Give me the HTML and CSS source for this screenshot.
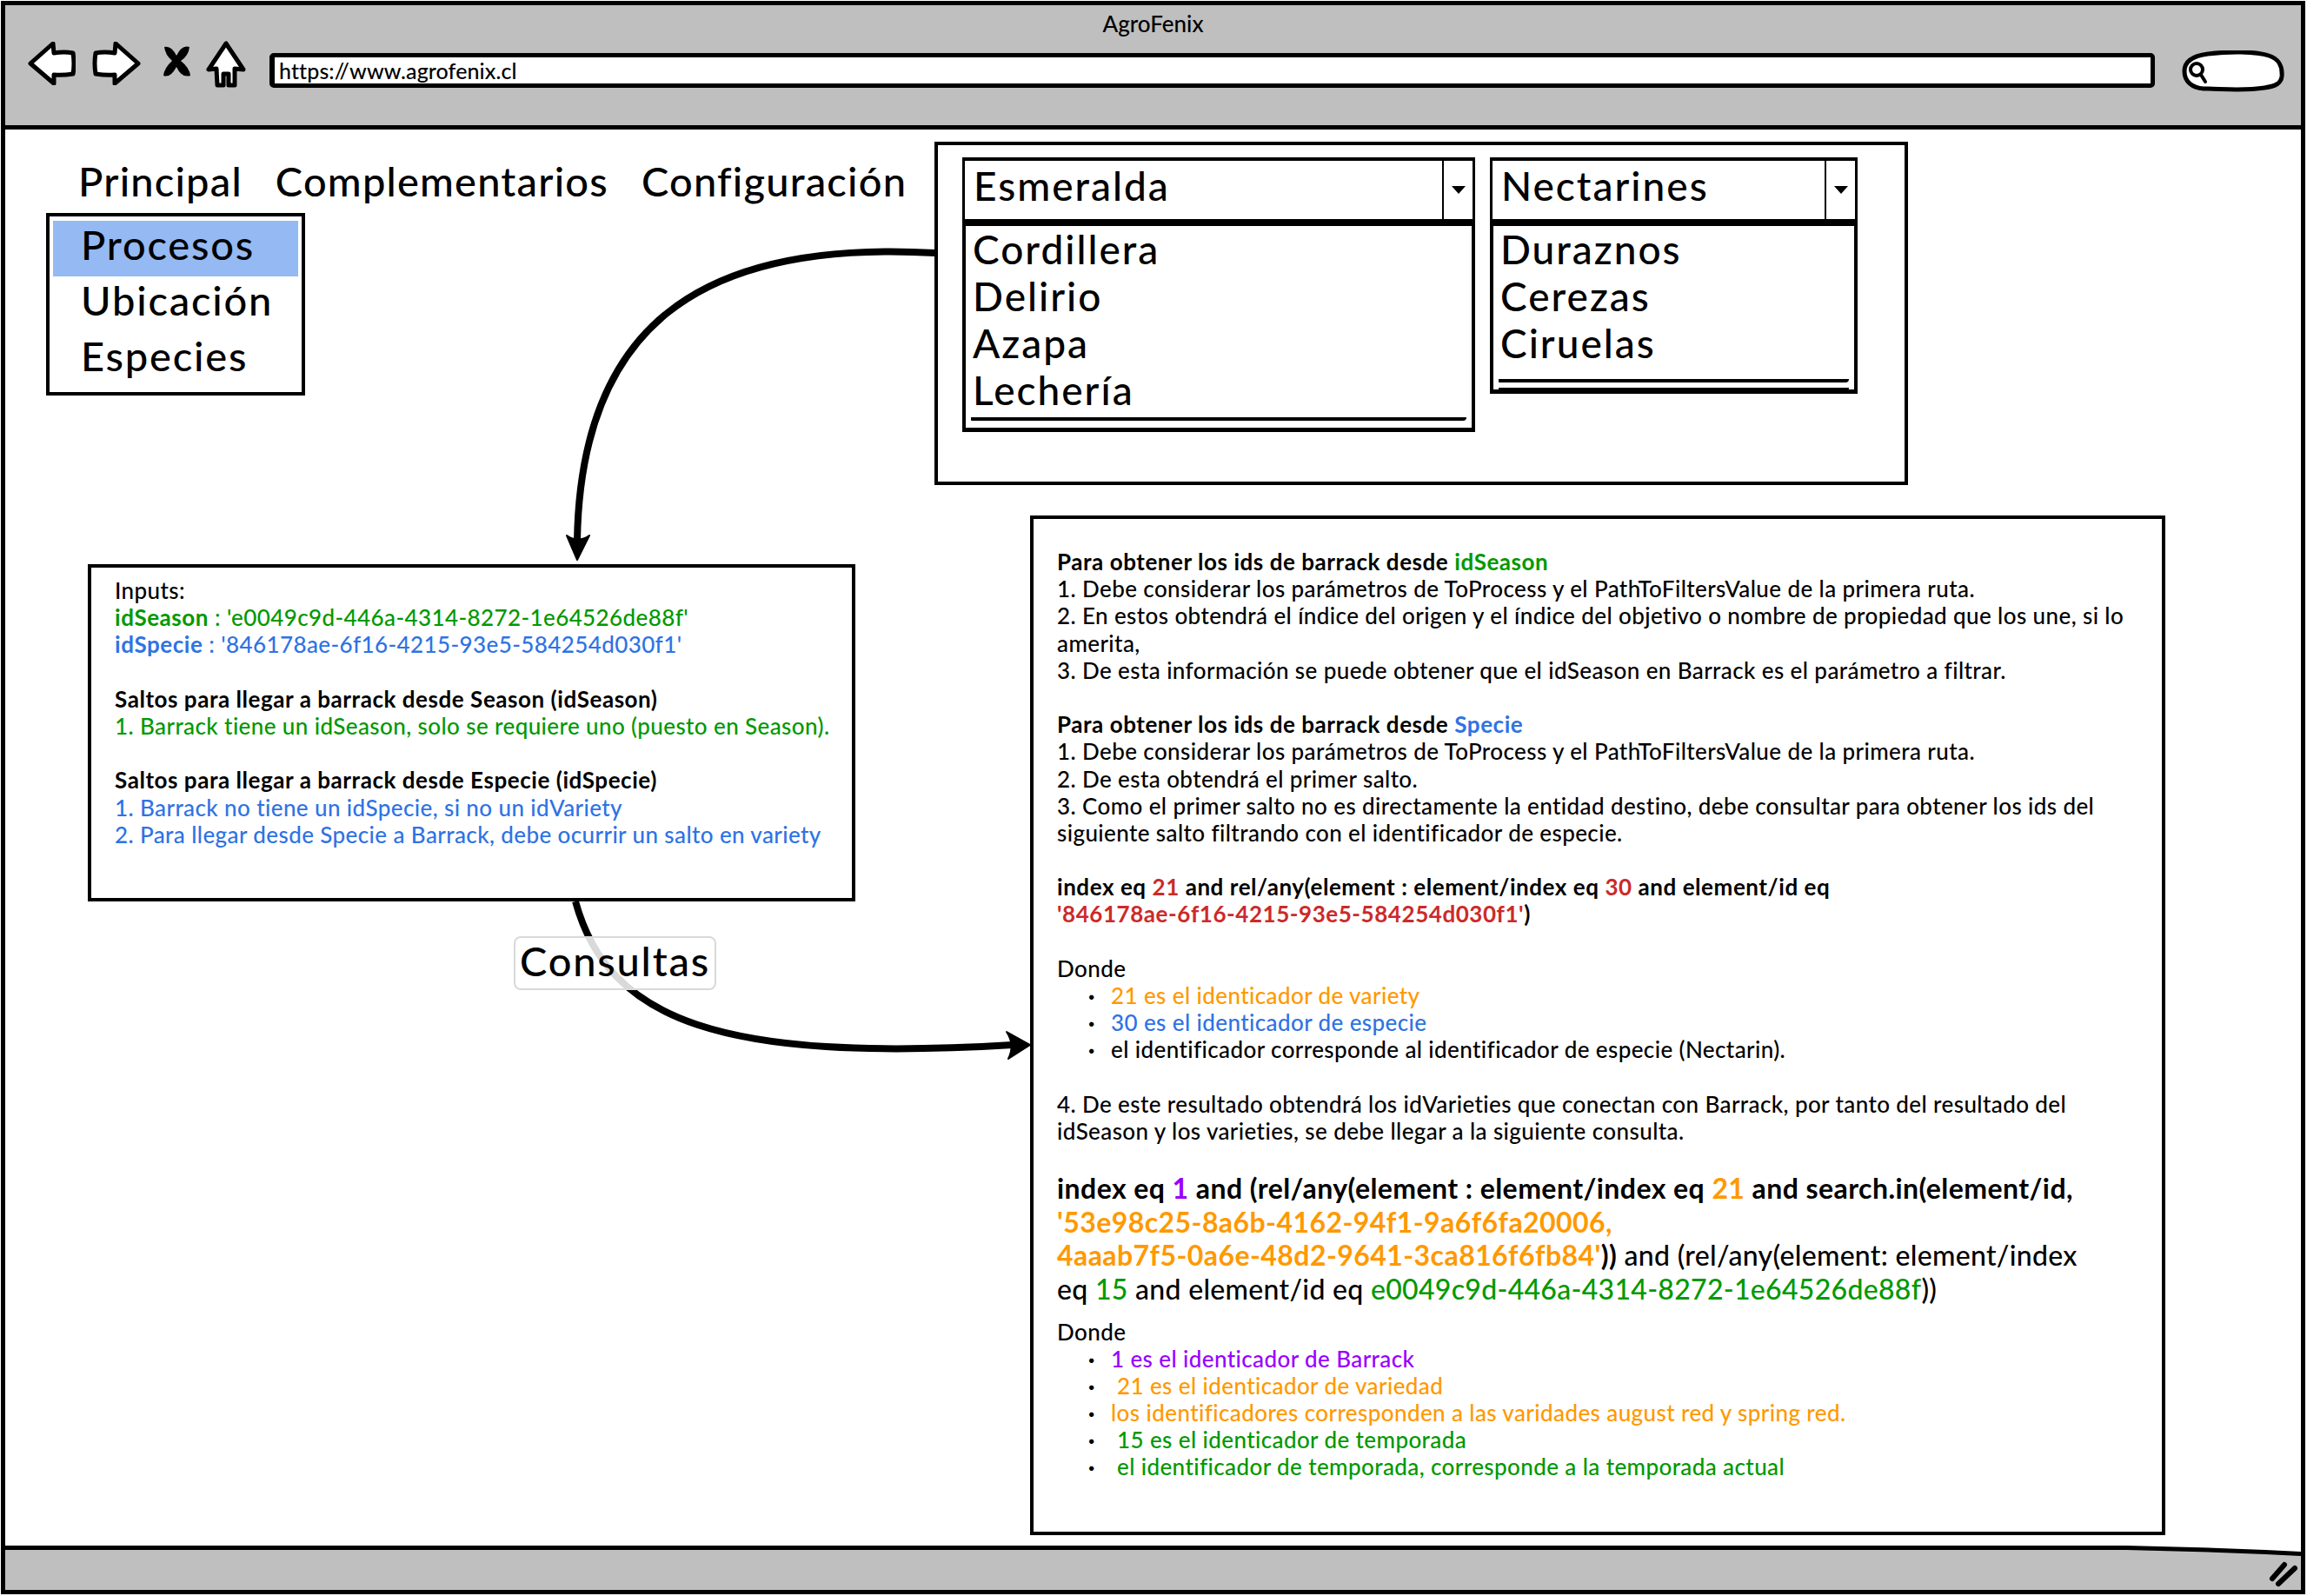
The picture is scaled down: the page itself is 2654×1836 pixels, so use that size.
FILE: index.html
```html
<!DOCTYPE html>
<html lang="es">
<head>
<meta charset="utf-8">
<title>AgroFenix</title>
<link rel="stylesheet" href="styles.css">
</head>
<body>
<div class="window">
  <div class="frame">
    <header class="browser-bar">
      <div class="browser-title">AgroFenix</div>
      <div class="toolbar">
        <svg class="icon icon-back" viewBox="0 0 55 50"><path d="M3 25 L29 2 L30 13 Q42 11 52 13 Q54 25 52 37 Q40 39 30 38 L30 48 Z"/></svg>
        <svg class="icon icon-forward" viewBox="0 0 56 50"><path d="M53 25 L27 2 L26 13 Q14 11 4 13 Q2 25 4 37 Q16 39 26 38 L26 48 Z"/></svg>
        <svg class="icon icon-stop" viewBox="0 0 33 37"><path class="solid" d="M2 2 Q10 0 16 12 Q22 -1 31 2 Q30 12 21 18 Q31 26 32 35 Q22 38 16 25 Q9 38 1 35 Q2 26 11 18 Q3 11 2 2 Z"/></svg>
        <svg class="icon icon-home" viewBox="0 0 46 54"><path d="M23 3 L3 33 L12 32 L13 51 L20 51 L20 38 L26 38 L26 51 L33 51 L33 32 L43 33 Z"/></svg>
        <div class="url-bar">https://www.agrofenix.cl</div>
        <svg class="search-pill" viewBox="0 0 118 48">
          <path class="pill-body" d="M3 24 C3 12 14 6 30 4 C55 1 85 1 100 6 C112 10 116 18 115 30 C114 38 108 41 95 43 C70 47 45 44 25 44 C12 43 3 36 3 24 Z"/>
          <circle class="pill-glass" cx="17" cy="22" r="7"/>
          <path class="pill-glass" d="M22 28 L27 36"/>
        </svg>
      </div>
    </header>

    <main class="canvas">
      <section class="left-col">
        <nav class="menu-bar">
          <span>Principal</span>
          <span>Complementarios</span>
          <span>Configuración</span>
        </nav>
        <ul class="dropdown">
          <li class="selected">Procesos</li>
          <li>Ubicación</li>
          <li>Especies</li>
        </ul>
        <div class="note-box inputs-box">
          <div class="line">Inputs:</div>
          <div class="line green"><b>idSeason</b> : 'e0049c9d-446a-4314-8272-1e64526de88f'</div>
          <div class="line blue"><b>idSpecie</b> : '846178ae-6f16-4215-93e5-584254d030f1'</div>
          <div class="line blank"></div>
          <div class="line"><b>Saltos para llegar a barrack desde Season (idSeason)</b></div>
          <div class="line green">1. Barrack tiene un idSeason, solo se requiere uno (puesto en Season).</div>
          <div class="line blank"></div>
          <div class="line"><b>Saltos para llegar a barrack desde Especie (idSpecie)</b></div>
          <div class="line blue">1. Barrack no tiene un idSpecie, si no un idVariety</div>
          <div class="line blue">2. Para llegar desde Specie a Barrack, debe ocurrir un salto en variety</div>
        </div>
      </section>

      <section class="right-col">
        <div class="filter-panel">
          <div class="combo combo-season">
            <div class="combo-head">
              <span class="combo-value">Esmeralda</span>
              <span class="combo-btn"><i class="caret"></i></span>
            </div>
            <ul class="combo-list">
              <li>Cordillera</li>
              <li>Delirio</li>
              <li>Azapa</li>
              <li>Lechería</li>
              <li class="scroll-mark"></li>
            </ul>
          </div>
          <div class="combo combo-species">
            <div class="combo-head">
              <span class="combo-value">Nectarines</span>
              <span class="combo-btn"><i class="caret"></i></span>
            </div>
            <ul class="combo-list">
              <li>Duraznos</li>
              <li>Cerezas</li>
              <li>Ciruelas</li>
              <li class="scroll-mark"></li>
              <li class="scroll-mark"></li>
            </ul>
          </div>
        </div>

        <article class="note-box explain-box">
          <div class="line"><b>Para obtener los ids de barrack desde</b> <b class="green">idSeason</b></div>
          <div class="line">1. Debe considerar los parámetros de ToProcess y el PathToFiltersValue de la primera ruta.</div>
          <div class="line">2. En estos obtendrá el índice del origen y el índice del objetivo o nombre de propiedad que los une, si lo</div>
          <div class="line">amerita,</div>
          <div class="line">3. De esta información se puede obtener que el idSeason en Barrack es el parámetro a filtrar.</div>
          <div class="line blank"></div>
          <div class="line"><b>Para obtener los ids de barrack desde</b> <b class="blue">Specie</b></div>
          <div class="line">1. Debe considerar los parámetros de ToProcess y el PathToFiltersValue de la primera ruta.</div>
          <div class="line">2. De esta obtendrá el primer salto.</div>
          <div class="line">3. Como el primer salto no es directamente la entidad destino, debe consultar para obtener los ids del</div>
          <div class="line">siguiente salto filtrando con el identificador de especie.</div>
          <div class="line blank"></div>
          <div class="line"><b>index eq <span class="red">21</span> and rel/any(element : element/index eq <span class="red">30</span> and element/id eq</b></div>
          <div class="line"><b><span class="red">'846178ae-6f16-4215-93e5-584254d030f1'</span>)</b></div>
          <div class="line blank"></div>
          <div class="line">Donde</div>
          <ul class="bullets">
            <li class="orange">21 es el identicador de variety</li>
            <li class="blue">30 es el identicador de especie</li>
            <li>el identificador corresponde al identificador de especie (Nectarin).</li>
          </ul>
          <div class="line blank"></div>
          <div class="line">4. De este resultado obtendrá los idVarieties que conectan con Barrack, por tanto del resultado del</div>
          <div class="line">idSeason y los varieties, se debe llegar a la siguiente consulta.</div>
          <div class="query">
            <div class="qline"><b>index eq <span class="purple">1</span> and (rel/any(element : element/index eq <span class="orange">21</span> and search.in(element/id,</b></div>
            <div class="qline"><b class="orange">'53e98c25-8a6b-4162-94f1-9a6f6fa20006,</b></div>
            <div class="qline"><b class="orange">4aaab7f5-0a6e-48d2-9641-3ca816f6fb84'</b><b>))</b> and (rel/any(element: element/index</div>
            <div class="qline">eq <span class="green">15</span> and element/id eq <span class="green">e0049c9d-446a-4314-8272-1e64526de88f</span>))</div>
          </div>
          <div class="line">Donde</div>
          <ul class="bullets">
            <li class="purple">1 es el identicador de Barrack</li>
            <li class="orange">&nbsp;21 es el identicador de variedad</li>
            <li class="orange">los identificadores corresponden a las varidades august red y spring red.</li>
            <li class="green">&nbsp;15 es el identicador de temporada</li>
            <li class="green">&nbsp;el identificador de temporada, corresponde a la temporada actual</li>
          </ul>
        </article>
      </section>
    </main>

    <footer class="status-bar">
      <svg class="status-art" viewBox="0 0 2641 51" preserveAspectRatio="none">
        <path class="status-fill" d="M0 2 L2440 2 Q2540 4 2641 9 L2641 51 L0 51 Z"/>
        <path class="status-line" d="M0 2.5 L2440 2.5 Q2540 4.5 2641 9.5"/>
        <path class="grip" d="M2608 38 L2622 22 M2615 44 L2634 26"/>
      </svg>
    </footer>
  </div>

  <svg class="connectors" viewBox="0 0 2654 1836">
    <path class="wire" d="M1076 291 C 800 275 668 380 664 622"/>
    <path class="head" d="M652 616 L664 644 L678 616 Q665 625 652 616 Z"/>
    <path class="wire" d="M662 1037 C 700 1175 830 1222 1165 1202"/>
    <path class="head" d="M1158 1187 L1185 1202 L1160 1218 Q1168 1202 1158 1187 Z"/>
  </svg>
  <div class="edge-label">Consultas</div>
</div>
</body>
</html>
```

FILE: styles.css
```css
* { box-sizing: border-box; }
html, body { margin: 0; padding: 0; background: #fff; }
body { font-family: "Lato", "Open Sans", sans-serif; color: #000; }
ul { list-style: none; margin: 0; padding: 0; }

.window {
  position: relative;
  width: 2654px;
  height: 1836px;
  padding: 1px 2px 2px 1px;
  overflow: hidden;
}
.frame {
  display: flex;
  flex-direction: column;
  height: 100%;
  border: 5px solid #000;
}

/* browser chrome */
.browser-bar {
  flex: none;
  height: 143px;
  background: #bfbfbf;
  border-bottom: 5px solid #000;
}
.browser-title {
  height: 40px;
  line-height: 42px;
  text-align: center;
  font-size: 26px;
  font-weight: 500;
}
.toolbar {
  display: flex;
  align-items: flex-start;
  padding: 0 19px 0 26px;
}
.icon { flex: none; display: block; }
.icon path { fill: #fff; stroke: #000; stroke-width: 5; stroke-linejoin: round; }
.icon path.solid { fill: #000; stroke: none; }
.icon-back { width: 55px; height: 50px; margin-top: 2px; }
.icon-forward { width: 56px; height: 50px; margin: 2px 0 0 19px; }
.icon-stop { width: 33px; height: 37px; margin: 6px 0 0 25px; }
.icon-home { width: 46px; height: 54px; margin: 1px 0 0 17px; }
.url-bar {
  flex: 1;
  height: 40px;
  margin: 15px 0 0 27px;
  padding-left: 5px;
  background: #fff;
  border: 5px solid #000;
  border-left-width: 6px;
  border-radius: 5px;
  font-size: 25px;
  font-weight: 500;
  line-height: 30px;
  letter-spacing: .1px;
}
.search-pill {
  flex: none;
  display: block;
  width: 118px;
  height: 48px;
  margin: 12px 0 0 31px;
}
.pill-body { fill: #fff; stroke: #000; stroke-width: 5; }
.pill-glass { fill: none; stroke: #000; stroke-width: 4; stroke-linecap: round; }

/* page canvas */
.canvas { flex: 1; display: flex; min-height: 0; background: #fff; }
.left-col { flex: none; width: 1069px; }
.right-col { flex: none; width: 1416px; }

.menu-bar {
  display: flex;
  gap: 38px;
  height: 96px;
  padding: 30px 0 0 84px;
  font-size: 47px;
  font-weight: 500;
  line-height: 58px;
  letter-spacing: 1.2px;
  white-space: nowrap;
}
.dropdown {
  width: 298px;
  height: 210px;
  margin-left: 47px;
  padding: 5px 4px;
  border: 4px solid #000;
  background: #fff;
  font-size: 47px;
  font-weight: 500;
  letter-spacing: 1.8px;
}
.dropdown li { height: 64px; line-height: 55px; padding-left: 32px; }
.dropdown li.selected { background: #94b9f3; }

.note-box {
  background: #fff;
  border: 4px solid #000;
  font-size: 26px;
  font-weight: 500;
  letter-spacing: .4px;
  white-space: nowrap;
}
.line { height: 31.2px; line-height: 31.2px; }
.line b, .qline b { font-weight: 700; letter-spacing: .55px; }
.inputs-box {
  width: 883px;
  height: 388px;
  margin: 194px 0 0 95px;
  padding: 11px 0 0 27px;
}

.filter-panel {
  display: flex;
  align-items: flex-start;
  gap: 17px;
  width: 1120px;
  height: 395px;
  margin-top: 14px;
  padding: 14px 0 0 28px;
  border: 4px solid #000;
  background: #fff;
}
.combo { flex: none; }
.combo-season { width: 590px; }
.combo-species { width: 423px; }
.combo-head {
  display: flex;
  justify-content: space-between;
  height: 71px;
  border: solid #000;
  border-width: 4px 3px 0;
  font-size: 46px;
  font-weight: 500;
  letter-spacing: 2px;
  line-height: 58px;
}
.combo-value { padding-left: 10px; }
.combo-btn {
  display: flex;
  align-items: center;
  justify-content: center;
  width: 35px;
  border-left: 2px solid #000;
}
.caret {
  width: 0;
  height: 0;
  border: solid transparent;
  border-width: 9px 8px 0;
  border-top-color: #000;
}
.combo-list {
  border: solid #000;
  border-width: 8px 4px 5px;
  font-size: 46px;
  font-weight: 500;
  letter-spacing: 2px;
  background: #fff;
}
.combo-list li { height: 54px; line-height: 54px; padding-left: 8px; }
.combo-list li.scroll-mark {
  height: 4px;
  margin: 0 6px 6px;
  padding: 0;
  background: #000;
  border-radius: 0 0 8px 2px;
}
.combo-season .combo-list { height: 245px; }
.combo-species .combo-list { height: 201px; }
.combo-season .scroll-mark { margin-top: 4px !important; }
.combo-species li:nth-child(4) { margin-top: 14px !important; }

.explain-box {
  width: 1306px;
  height: 1173px;
  margin: 35px 0 0 110px;
  padding: 34px 0 0 27px;
}
.bullets li {
  display: flex;
  height: 31.2px;
  line-height: 31.2px;
  padding-left: 36px;
}
.bullets li::before {
  content: "·";
  width: 26px;
  flex: none;
  color: #000;
  font-weight: 900;
}
.query {
  margin: 31px 0 14px;
  font-size: 32px;
  letter-spacing: .3px;
}
.qline { height: 38.6px; line-height: 38.6px; }
.qline b { letter-spacing: .43px; }

.green { color: #009900; }
.blue { color: #2f73e4; }
.red { color: #cc2a2a; }
.orange { color: #ff9900; }
.purple { color: #9900ff; }

/* status bar */
.status-bar { flex: none; height: 51px; }
.status-art { display: block; width: 100%; height: 100%; }
.status-fill { fill: #bfbfbf; }
.status-line { fill: none; stroke: #000; stroke-width: 5; }
.grip { fill: none; stroke: #000; stroke-width: 6; stroke-linecap: round; }

/* overlays */
.connectors {
  position: absolute;
  left: 0;
  top: 0;
  width: 2654px;
  height: 1836px;
  pointer-events: none;
}
.wire { fill: none; stroke: #000; stroke-width: 8; }
.head { fill: #000; stroke: #000; stroke-width: 2; stroke-linejoin: round; }
.edge-label {
  position: absolute;
  left: 591px;
  top: 1077px;
  width: 233px;
  height: 62px;
  background: rgba(255, 255, 255, .85);
  border: 2px solid #d9d9d9;
  border-radius: 8px;
  font-size: 47px;
  font-weight: 500;
  letter-spacing: 1.8px;
  line-height: 52px;
  text-align: center;
}
```
